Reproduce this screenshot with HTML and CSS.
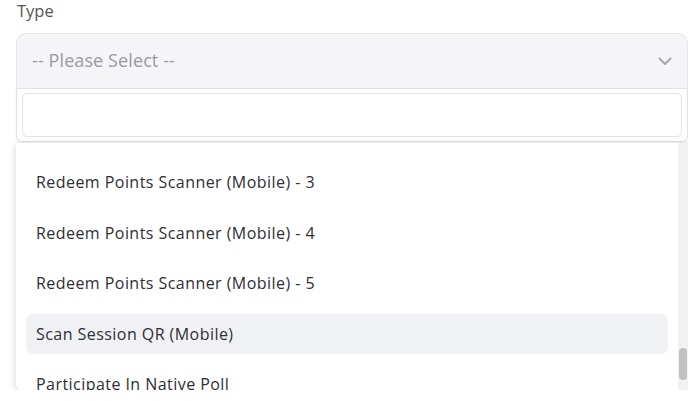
FILE: index.html
```html
<!DOCTYPE html>
<html>
<head>
<meta charset="utf-8">
<link rel="stylesheet" href="styles.css">
</head>
<body>
<div class="field">
  <div class="label">Type</div>
  <div class="select">
    <span class="placeholder">-- Please Select --</span>
    <svg class="chev" width="14" height="9" viewBox="0 0 14 9"><path d="M1.5 1.5 L7 7 L12.5 1.5" fill="none" stroke="#a8a8ad" stroke-width="2" stroke-linecap="round" stroke-linejoin="round"/></svg>
  </div>
  <div class="search">
    <div class="search-input"></div>
  </div>
  <div class="dropdown">
    <div class="list">
      <div class="item">Redeem Points Scanner (Mobile) - 3</div>
      <div class="item">Redeem Points Scanner (Mobile) - 4</div>
      <div class="item">Redeem Points Scanner (Mobile) - 5</div>
      <div class="item active">Scan Session QR (Mobile)</div>
      <div class="item">Participate In Native Poll</div>
    </div>
    <div class="scrollbar"><div class="thumb"></div></div>
  </div>
</div>
</body>
</html>
```
FILE: styles.css
```css
html, body {
  margin: 0;
  padding: 0;
  background: #ffffff;
  font-family: "Open Sans", "Lato", sans-serif;
  overflow: hidden;
}
.field {
  padding: 1px 0 0 16px;
}
.label {
  font-size: 16.5px;
  line-height: 20px;
  color: #555558;
  padding-left: 1px;
  margin-bottom: 12px;
}
.select {
  height: 55px;
  box-sizing: border-box;
  background: #f5f5f7;
  border: 1px solid #e6e6ea;
  border-bottom: none;
  border-radius: 10px 10px 0 0;
  display: flex;
  align-items: center;
  justify-content: space-between;
  padding: 0 15px 3px 15px;
}
.placeholder {
  font-size: 18px;
  letter-spacing: 0.1px;
  color: #9a9a9e;
}
.chev {
  margin-top: 3px;
}
.search {
  height: 54px;
  box-sizing: border-box;
  background: #ffffff;
  border: 1px solid #e3e3e6;
  border-radius: 0 0 6px 6px;
  padding: 4px 5px;
  box-shadow: 0 2px 3px rgba(0,0,0,0.06);
}
.search-input {
  height: 44px;
  box-sizing: border-box;
  border: 1px solid #e2e2e5;
  border-radius: 5px;
  background: #fff;
}
.dropdown {
  margin-top: 1px;
  height: 247px;
  display: flex;
  background: #ffffff;
  border-radius: 0 0 6px 6px;
  box-shadow: 0 3px 10px rgba(0,0,0,0.10), -2px 0 6px rgba(0,0,0,0.05);
  overflow: hidden;
}
.list {
  flex: 1;
  padding: 19px 10px 0 10px;
  display: flex;
  flex-direction: column;
  gap: 10px;
}
.item {
  flex: none;
  height: 40.5px;
  display: flex;
  align-items: center;
  padding-left: 10px;
  border-radius: 7px;
  font-size: 16px;
  letter-spacing: 0.45px;
  color: #2e2e33;
}
.item.active {
  background: #f0f1f5;
}
.scrollbar {
  width: 10px;
  background: #f1f1f1;
  position: relative;
}
.thumb {
  position: absolute;
  left: 1px;
  width: 8px;
  top: 205px;
  height: 32px;
  background: #c1c1c1;
  border-radius: 4px;
}
```
